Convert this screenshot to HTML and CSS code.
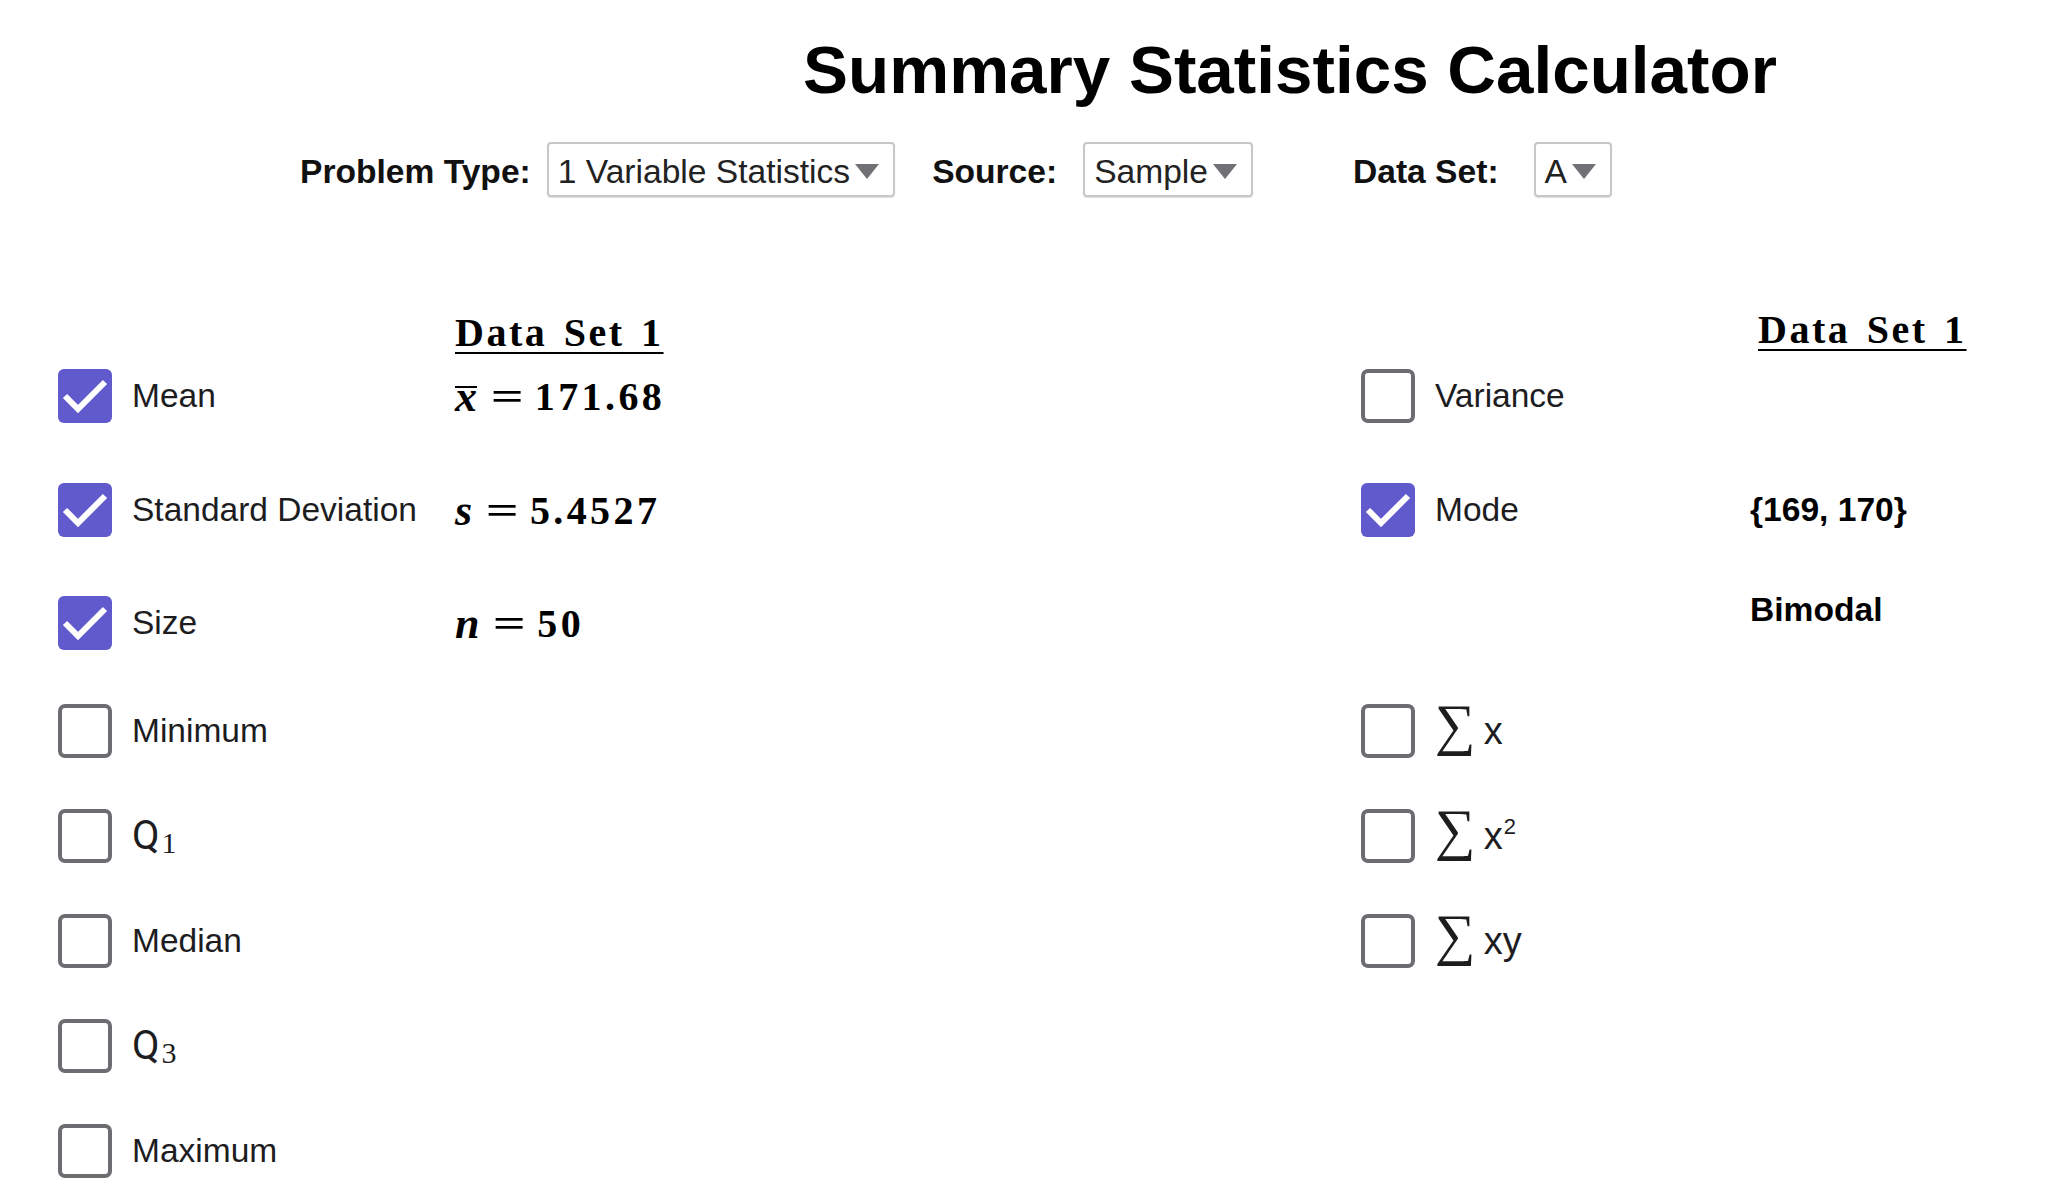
FILE: index.html
```html
<!DOCTYPE html>
<html lang="en">
<head>
<meta charset="utf-8">
<title>Summary Statistics Calculator</title>
<link rel="stylesheet" href="styles.css">
</head>
<body>
<header class="top">
  <h1 class="title">Summary Statistics Calculator</h1>
  <div class="controls">
    <span class="ctl-label lbl-type">Problem Type:</span>
    <div class="select sel-type"><span>1 Variable Statistics</span><span class="arrow"></span></div>
    <span class="ctl-label lbl-source">Source:</span>
    <div class="select sel-source"><span>Sample</span><span class="arrow"></span></div>
    <span class="ctl-label lbl-set">Data Set:</span>
    <div class="select sel-set"><span>A</span><span class="arrow"></span></div>
  </div>
</header>

<main class="stats">
  <!-- header row -->
  <div class="head"></div>
  <div class="head"></div>
  <div class="head"><span class="ds">Data Set 1</span></div>
  <div class="head"></div>
  <div class="head"></div>
  <div class="head head-right"><span class="ds">Data Set 1</span></div>

  <!-- row 1 -->
  <div class="cell"><span class="cb on"><svg viewBox="0 0 54 54"><path d="M7 27 L20 40 L47 13"/></svg></span></div>
  <div class="cell label">Mean</div>
  <div class="cell val"><span class="mi xbar">x</span><span class="eq">=</span><span class="num">171.68</span></div>
  <div class="cell"><span class="cb"></span></div>
  <div class="cell label">Variance</div>
  <div class="cell"></div>

  <!-- row 2 -->
  <div class="cell"><span class="cb on"><svg viewBox="0 0 54 54"><path d="M7 27 L20 40 L47 13"/></svg></span></div>
  <div class="cell label">Standard Deviation</div>
  <div class="cell val"><span class="mi">s</span><span class="eq">=</span><span class="num">5.4527</span></div>
  <div class="cell"><span class="cb on"><svg viewBox="0 0 54 54"><path d="M7 27 L20 40 L47 13"/></svg></span></div>
  <div class="cell label">Mode</div>
  <div class="cell result">{169, 170}</div>

  <!-- row 3 -->
  <div class="cell"><span class="cb on"><svg viewBox="0 0 54 54"><path d="M7 27 L20 40 L47 13"/></svg></span></div>
  <div class="cell label">Size</div>
  <div class="cell val"><span class="mi">n</span><span class="eq">=</span><span class="num">50</span></div>
  <div class="cell"></div>
  <div class="cell"></div>
  <div class="cell result"><span class="bimodal">Bimodal</span></div>

  <!-- row 4 -->
  <div class="cell"><span class="cb"></span></div>
  <div class="cell label">Minimum</div>
  <div class="cell"></div>
  <div class="cell"><span class="cb"></span></div>
  <div class="cell label"><span class="sum"><span class="sigma">∑</span>x</span></div>
  <div class="cell"></div>

  <!-- row 5 -->
  <div class="cell"><span class="cb"></span></div>
  <div class="cell label"><span class="q">Q<span class="qsub">1</span></span></div>
  <div class="cell"></div>
  <div class="cell"><span class="cb"></span></div>
  <div class="cell label"><span class="sum"><span class="sigma">∑</span>x<span class="sup">2</span></span></div>
  <div class="cell"></div>

  <!-- row 6 -->
  <div class="cell"><span class="cb"></span></div>
  <div class="cell label">Median</div>
  <div class="cell"></div>
  <div class="cell"><span class="cb"></span></div>
  <div class="cell label"><span class="sum"><span class="sigma">∑</span>xy</span></div>
  <div class="cell"></div>

  <!-- row 7 -->
  <div class="cell"><span class="cb"></span></div>
  <div class="cell label"><span class="q">Q<span class="qsub">3</span></span></div>
  <div class="cell"></div>
  <div class="cell"></div>
  <div class="cell"></div>
  <div class="cell"></div>

  <!-- row 8 -->
  <div class="cell"><span class="cb"></span></div>
  <div class="cell label">Maximum</div>
  <div class="cell"></div>
  <div class="cell"></div>
  <div class="cell"></div>
  <div class="cell"></div>
</main>
</body>
</html>
```

FILE: styles.css
```css
html, body {
  margin: 0;
  padding: 0;
  background: #ffffff;
}

body {
  font-family: "Liberation Sans", Arial, sans-serif;
  color: #1d1d1f;
}

/* ---------- header ---------- */
.title {
  margin: 0;
  padding: 31px 0 0 525px;
  font-size: 67.4px;
  line-height: 77px;
  font-weight: bold;
  color: #000;
  text-align: center;
}

.controls {
  display: flex;
  align-items: center;
  margin-top: 34px;
  padding-left: 300px;
  height: 55px;
}

.ctl-label {
  font-size: 33.6px;
  font-weight: bold;
  color: #111;
  white-space: nowrap;
  margin-top: 5px;
}

.lbl-type { margin-right: 16px; }
.lbl-source { margin-right: 26px; }
.lbl-set { margin-right: 35px; }
.sel-type { margin-right: 37px; }
.sel-source { margin-right: 100px; }

.select {
  display: inline-flex;
  align-items: center;
  box-sizing: border-box;
  height: 55px;
  padding: 5px 14px 0 9px;
  border: 2px solid #c6c6cb;
  border-radius: 4px;
  box-shadow: 0 1px 1px rgba(0, 0, 0, 0.12);
  font-size: 33.6px;
  color: #222;
  white-space: nowrap;
}

.arrow {
  width: 0;
  height: 0;
  margin-left: 5px;
  margin-top: -1px;
  border-left: 12px solid transparent;
  border-right: 12px solid transparent;
  border-top: 15px solid #707075;
}

/* ---------- statistics grid ---------- */
.stats {
  display: grid;
  margin-top: 113px;
  padding-left: 58px;
  grid-template-columns: 74px 323px 906px 74px 315px 1fr;
  grid-template-rows: 59px 114px 113px 108px 105px 105px 105px 105px 54px;
  align-items: start;
}

.head {
  align-self: stretch;
  display: flex;
  align-items: flex-end;
  padding-bottom: 16px;
}

.head-right {
  padding-bottom: 19px;
  padding-left: 8px;
}

.ds {
  font-family: "Liberation Serif", "Times New Roman", serif;
  font-weight: bold;
  font-size: 40px;
  line-height: 40px;
  letter-spacing: 2.5px;
  word-spacing: 4px;
  color: #000;
  text-decoration: underline;
  text-decoration-thickness: 2px;
  text-underline-offset: 6px;
  white-space: nowrap;
}

.cell {
  height: 54px;
  display: flex;
  align-items: center;
  white-space: nowrap;
}

.label {
  font-size: 33.5px;
  color: #1d1d1f;
}

/* checkboxes */
.cb {
  display: block;
  box-sizing: border-box;
  width: 54px;
  height: 54px;
  border: 4px solid #6c6c71;
  border-radius: 7px;
  background: #fff;
}

.cb.on {
  border: none;
  border-radius: 6px;
  background: #605acd;
}

.cb svg {
  display: block;
  width: 54px;
  height: 54px;
}

.cb path {
  fill: none;
  stroke: #ffffff;
  stroke-width: 6;
}

/* math values */
.val {
  font-family: "Liberation Serif", "Times New Roman", serif;
  font-size: 40px;
  font-weight: bold;
  color: #000;
}

.mi {
  font-style: italic;
  font-weight: bold;
  font-size: 44px;
}

.xbar {
  display: inline-block;
  border-top: 2.5px solid #000;
  line-height: 18px;
}

.eq {
  display: inline-block;
  font-weight: bold;
  transform: scaleX(1.45);
  margin: 0 16px 0 19px;
}

.num {
  letter-spacing: 3.4px;
}

/* right column values */
.result {
  font-size: 33.6px;
  font-weight: bold;
  color: #000;
}

.bimodal {
  margin-bottom: 26px;
}

/* Q labels */
.q {
  font-family: Roboto, "Liberation Sans", sans-serif;
  font-size: 40px;
  line-height: 1;
}

.qsub {
  font-family: "Liberation Serif", "Times New Roman", serif;
  font-size: 30px;
  line-height: 0;
  vertical-align: -4px;
  margin-left: 2px;
}

/* sum labels */
.sum {
  font-size: 38px;
  line-height: 1;
}

.sigma {
  font-family: "Liberation Serif", "DejaVu Serif", serif;
  font-size: 57px;
  line-height: 0;
  margin-right: 8px;
}

.sup {
  font-size: 22px;
  line-height: 0;
  vertical-align: 15px;
  margin-left: 1px;
}
```
